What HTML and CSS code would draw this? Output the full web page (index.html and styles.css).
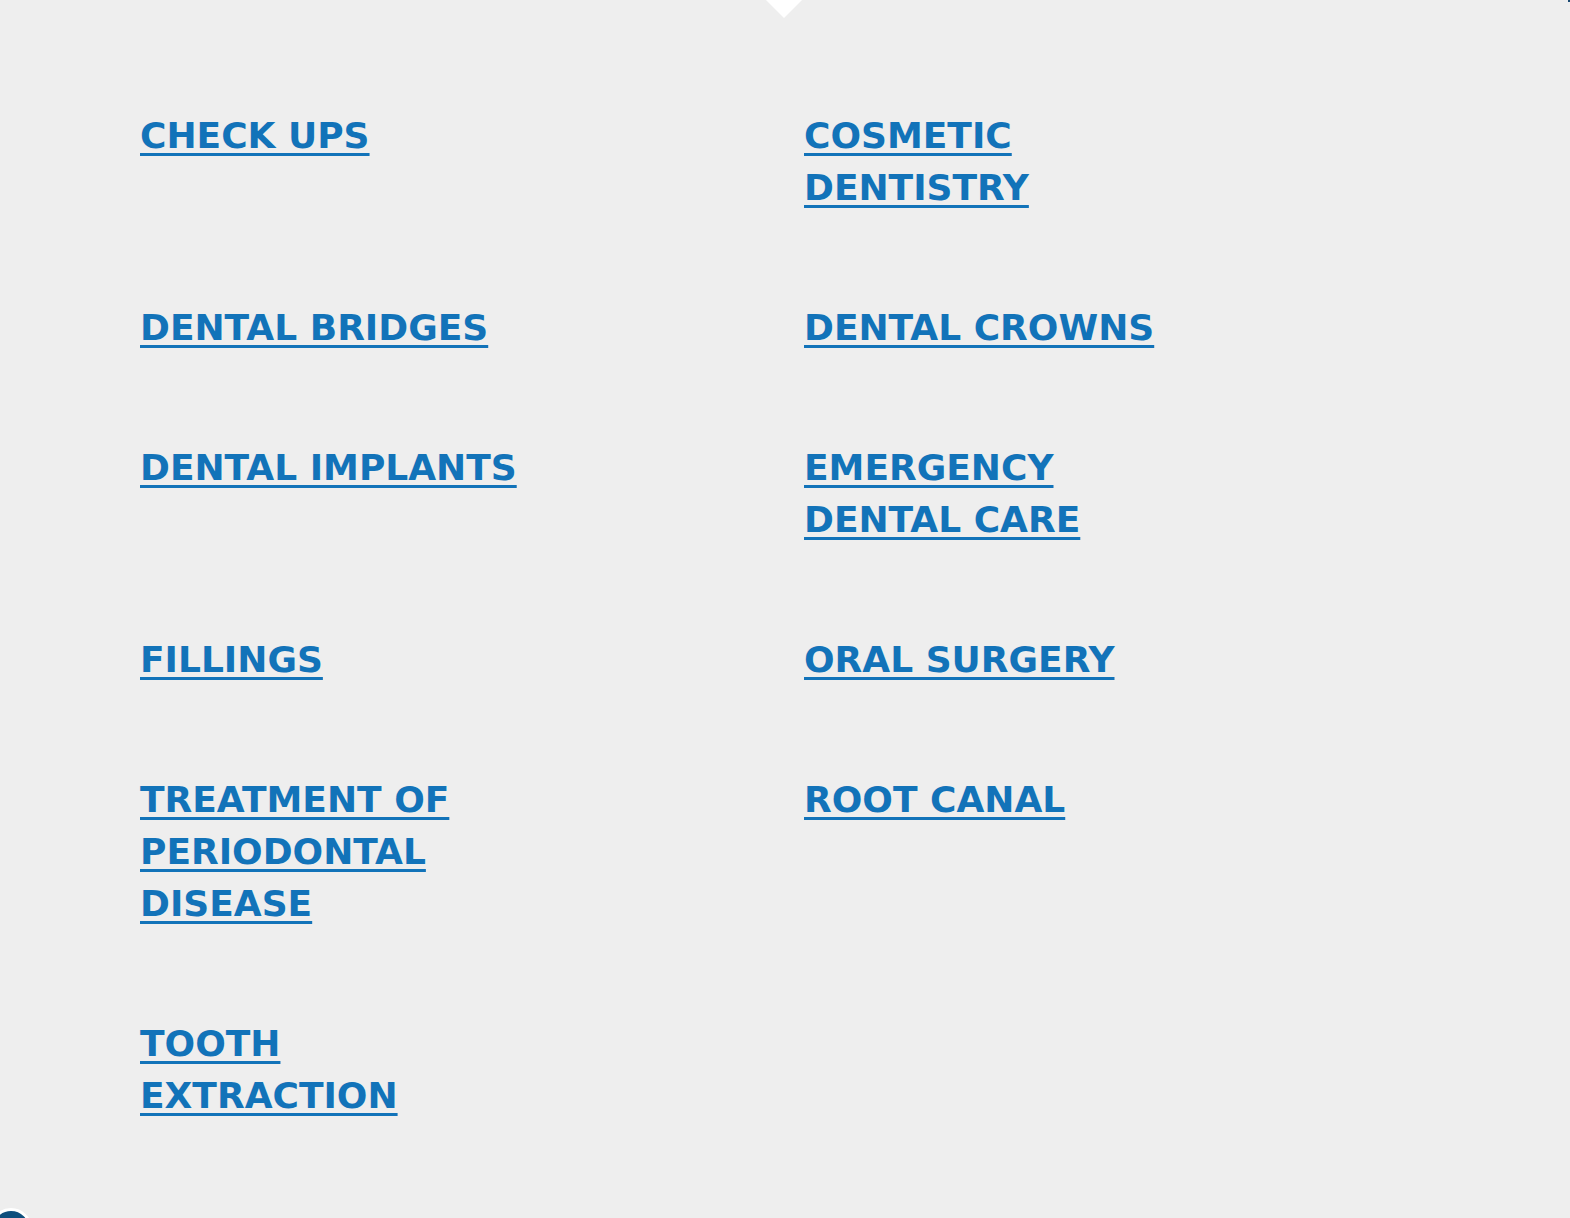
FILE: index.html
```html
<!DOCTYPE html>
<html lang="en">
<head>
<meta charset="utf-8">
<title>Services</title>
<link rel="stylesheet" href="styles.css">
</head>
<body>
<section class="services">
  <span class="notch"></span>
  <ul class="service-grid">
    <li class="service-item"><a href="#" class="service-link">CHECK UPS</a></li>
    <li class="service-item"><a href="#" class="service-link">COSMETIC DENTISTRY</a></li>
    <li class="service-item"><a href="#" class="service-link">DENTAL BRIDGES</a></li>
    <li class="service-item"><a href="#" class="service-link">DENTAL CROWNS</a></li>
    <li class="service-item"><a href="#" class="service-link">DENTAL IMPLANTS</a></li>
    <li class="service-item"><a href="#" class="service-link">EMERGENCY DENTAL CARE</a></li>
    <li class="service-item"><a href="#" class="service-link">FILLINGS</a></li>
    <li class="service-item"><a href="#" class="service-link">ORAL SURGERY</a></li>
    <li class="service-item"><a href="#" class="service-link">TREATMENT OF PERIODONTAL DISEASE</a></li>
    <li class="service-item"><a href="#" class="service-link">ROOT CANAL</a></li>
    <li class="service-item"><a href="#" class="service-link">TOOTH EXTRACTION</a></li>
  </ul>
  <span class="corner-mark"></span>
</section>
<button class="float-button" aria-label="Open"></button>
</body>
</html>
```
FILE: styles.css
```css
html, body {
  margin: 0;
  padding: 0;
}

body {
  background: #eeeeee;
  font-family: "DejaVu Sans", "Liberation Sans", Arial, sans-serif;
  height: 1218px;
  overflow: hidden;
  position: relative;
}

.services {
  position: relative;
  padding: 110px 0 0 140px;
}

.notch {
  position: absolute;
  top: 0;
  left: 50%;
  margin-left: -19px;
  width: 0;
  height: 0;
  border-left: 18px solid transparent;
  border-right: 18px solid transparent;
  border-top: 18px solid #ffffff;
}

.corner-mark {
  position: absolute;
  top: 0;
  right: 0;
  width: 2px;
  height: 2px;
  background: #1b4a73;
}

.service-grid {
  list-style: none;
  margin: 0;
  padding: 0;
  display: grid;
  grid-template-columns: 664px 664px;
  row-gap: 88px;
  align-items: start;
}

.service-item {
  max-width: 400px;
  font-size: 36px;
  line-height: 52px;
  font-weight: 700;
  letter-spacing: 0;
}

.service-link {
  color: #1273b9;
  text-decoration: underline;
  text-decoration-thickness: 3px;
  text-underline-offset: 5px;
}

.float-button {
  position: absolute;
  left: -10px;
  top: 1208px;
  width: 42px;
  height: 42px;
  border-radius: 50%;
  border: 3px solid #ffffff;
  background: #0e4e7c;
  padding: 0;
}
```
